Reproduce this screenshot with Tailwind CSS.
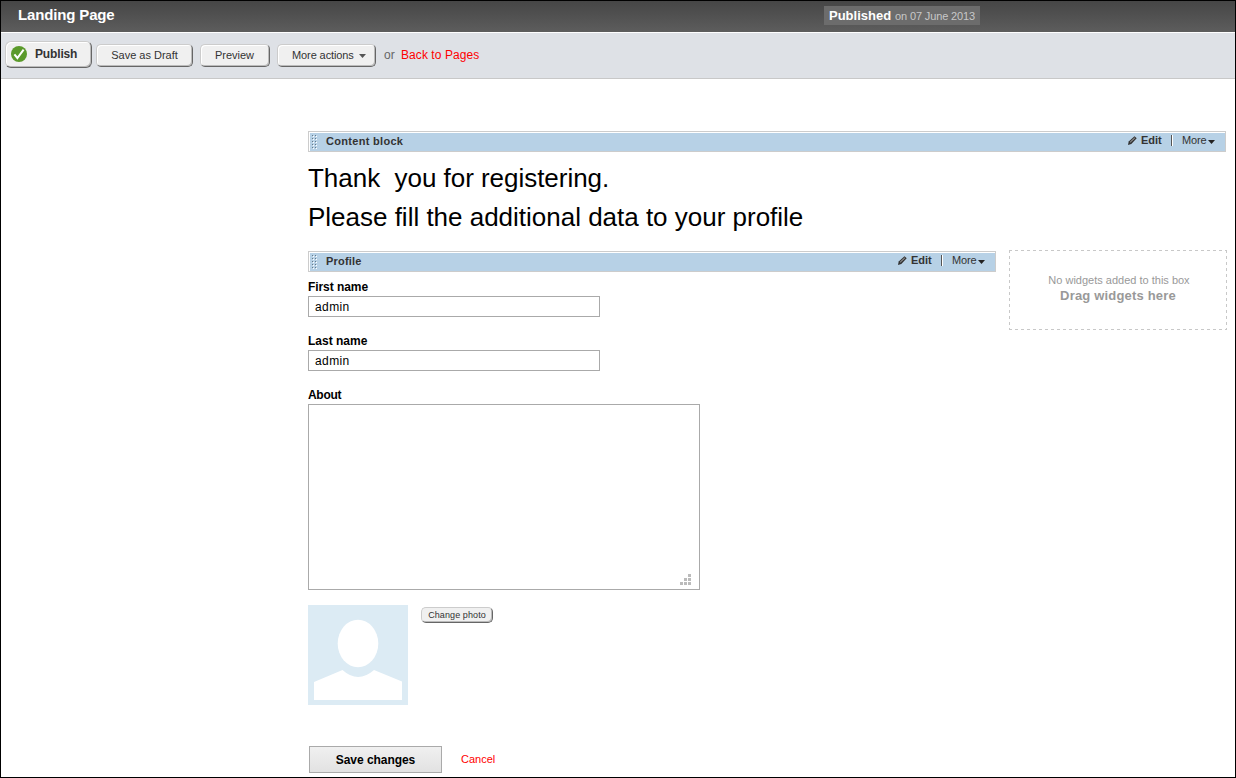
<!DOCTYPE html>
<html lang="en">
<head>
<meta charset="utf-8">
<title>Landing Page</title>
<script src="https://cdn.jsdelivr.net/npm/@tailwindcss/browser@4"></script>
</head>
<body class="bg-white font-['Liberation_Sans',Arial,sans-serif] text-black">
<div class="flex h-[778px] w-[1236px] flex-col overflow-hidden border border-black whitespace-nowrap">
  <header class="flex h-[31px] shrink-0 items-start bg-linear-to-b from-[#464646] to-[#5d5d5d] pl-[17px]">
    <h1 class="mt-[4px] w-[806px] text-[15px] leading-5 font-bold tracking-[-0.15px] text-white">Landing Page</h1>
    <p class="mt-[5px] flex h-[19px] w-[156px] items-baseline bg-[#6c6c6c] pl-[5px] leading-[19px] text-[#c8c8c8]"><b class="w-[66px] text-[13px] text-white">Published</b><span class="text-[11px] tracking-[-0.13px]">on 07 June 2013</span></p>
  </header>
  <nav class="flex h-[47px] shrink-0 items-start border-t border-b border-t-white border-b-[#c8c8c8] bg-[#dee1e6] pl-[4px] text-[11px] text-[#333]">
    <button class="mt-[8px] flex h-[27px] w-[87px] items-center rounded-[6px] border border-t-[#ccc] border-r-[#666] border-b-[#666] border-l-[#ccc] bg-[#f0f0f0] pb-px pl-[5px] text-[12px] font-bold tracking-[-0.15px] shadow-[inset_1px_1px_0_#fff,inset_-1px_-1px_0_#bbb]">
      <svg class="mr-[8px] size-4" viewBox="0 0 16 16"><circle cx="8" cy="8" r="8" fill="#5b9a2b"/><path d="M3.400 8.300l3 3.700L12.600 3.600" fill="none" stroke="#fff" stroke-width="2"/></svg>Publish
    </button>
    <button class="mt-[11px] ml-[4px] h-[23px] w-[97px] rounded-[5px] border border-t-[#ccc] border-r-[#666] border-b-[#666] border-l-[#ccc] bg-[#f0f0f0] shadow-[inset_1px_1px_0_#fff,inset_-1px_-1px_0_#bbb]">Save as Draft</button>
    <button class="mt-[11px] ml-[7px] h-[23px] w-[70px] rounded-[5px] border border-t-[#ccc] border-r-[#666] border-b-[#666] border-l-[#ccc] bg-[#f0f0f0] pr-[7px] pl-[6px] shadow-[inset_1px_1px_0_#fff,inset_-1px_-1px_0_#bbb]">Preview</button>
    <button class="mt-[11px] ml-[7px] flex h-[23px] w-[99px] items-center rounded-[5px] border border-t-[#ccc] border-r-[#666] border-b-[#666] border-l-[#ccc] bg-[#f0f0f0] pl-[14px] shadow-[inset_1px_1px_0_#fff,inset_-1px_-1px_0_#bbb]"><span class="w-[67px] text-left tracking-[-0.1px]">More actions</span><svg class="mt-px h-1 w-[7px]" viewBox="0 0 7 4"><path d="M0 0h7L3.500 4z" fill="#555"/></svg></button>
    <span class="mt-[14px] ml-[8px] w-[17px] text-[12px] leading-4 text-[#666]">or</span>
    <a class="mt-[14px] text-[12px] leading-4 tracking-[0.07px] text-[#f00]">Back to Pages</a>
  </nav>

  <main class="ml-[307px] flex flex-col pt-[52px]">
    <div class="flex h-[21px] w-[918px] items-start border border-[#ccc] bg-[#b7d1e6] text-[11px] leading-[18px] text-[#333] shadow-[inset_1px_1px_0_#fff]">
      <svg class="mt-[3px] ml-[3px] h-[15px] w-[6px]" viewBox="0 0 6 15"><defs><pattern id="grip" width="3" height="3" patternUnits="userSpaceOnUse"><path d="M0 0h1v1h-1z" fill="#667a8a"/><path d="M1 1h1v1h-1z" fill="#fff"/></pattern></defs><path d="M0 0h6v15h-6z" fill="url(#grip)"/></svg>
      <b class="ml-[8px] tracking-[0.3px]">Content block</b>
      <svg class="mt-[4px] ml-auto h-[9px] w-[9px]" viewBox="0 0 9 9"><path d="M0 9l.7-3.400L6.500 .3 8.700 2.300 3.300 8z" fill="#333"/><path d="M2.200 6.200L6.800 1.900" stroke="#b9b9b9" stroke-width="1"/></svg>
      <b class="ml-[4px] w-[30px] leading-4">Edit</b>
      <i class="mt-[3px] h-[11px] w-[2px] border-r border-l border-r-white border-l-[#555]"></i>
      <span class="ml-[9px] w-[26px] leading-4 tracking-[-0.15px]">More</span>
      <svg class="mt-[8px] mr-[10px] h-1 w-[7px]" viewBox="0 0 7 4"><path d="M0 0h7L3.500 4z" fill="#222"/></svg>
    </div>
    <div class="mt-[7px] h-[91px] text-[26px] leading-[39px]">
      <p class="whitespace-pre tracking-[-0.03px]">Thank  you for registering.</p>
      <p class="tracking-[-0.01px]">Please fill the additional data to your profile</p>
    </div>
    <div class="flex items-start">
      <section class="w-[688px]">
        <div class="mt-px flex h-[21px] items-start border border-[#ccc] bg-[#b7d1e6] text-[11px] leading-[18px] text-[#333] shadow-[inset_1px_1px_0_#fff]">
          <svg class="mt-[3px] ml-[3px] h-[15px] w-[6px]" viewBox="0 0 6 15"><path d="M0 0h6v15h-6z" fill="url(#grip)"/></svg>
          <b class="ml-[8px] tracking-[0.2px]">Profile</b>
          <svg class="mt-[4px] ml-auto h-[9px] w-[9px]" viewBox="0 0 9 9"><path d="M0 9l.7-3.400L6.500 .3 8.700 2.300 3.300 8z" fill="#333"/><path d="M2.200 6.200L6.800 1.900" stroke="#b9b9b9" stroke-width="1"/></svg>
          <b class="ml-[4px] w-[30px] leading-4">Edit</b>
          <i class="mt-[3px] h-[11px] w-[2px] border-r border-l border-r-white border-l-[#555]"></i>
          <span class="ml-[9px] w-[26px] leading-4 tracking-[-0.15px]">More</span>
          <svg class="mt-[8px] mr-[10px] h-1 w-[7px]" viewBox="0 0 7 4"><path d="M0 0h7L3.500 4z" fill="#222"/></svg>
        </div>
        <div class="mt-[6px] text-[12px]">
          <label class="block h-[18px] leading-[18px] font-bold tracking-[-0.07px]">First name</label>
          <div class="h-[21px] w-[292px] border border-[#aaa] pl-[6px] leading-[20px] tracking-[0.4px]">admin</div>
          <label class="mt-[15px] block h-[18px] leading-[18px] font-bold">Last name</label>
          <div class="h-[21px] w-[292px] border border-[#aaa] pl-[6px] leading-[20px] tracking-[0.4px]">admin</div>
          <label class="mt-[15px] block h-[18px] leading-[18px] font-bold tracking-[-0.3px]">About</label>
          <div class="flex h-[186px] w-[392px] items-end justify-end border border-[#aaa] pr-[8px] pb-[4px]">
            <svg class="size-[11px]" viewBox="0 0 11 11"><path d="M8 0h3v3H8zM4 4h3v3H4zM8 4h3v3H8zM0 8h3v3H0zM4 8h3v3H4zM8 8h3v3H8z" fill="#bbb"/></svg>
          </div>
        </div>
        <div class="mt-[15px] flex items-start">
          <svg class="size-[100px]" viewBox="0 0 100 100"><path d="M0 0h100v100H0z" fill="#dcebf4"/><ellipse cx="50" cy="38.500" rx="20.300" ry="23.700" fill="#fff"/><path d="M6 77L34.500 65Q50 79 66 65L94 76.500V95H6z" fill="#fff"/></svg>
          <button class="mt-[2px] ml-[13px] h-[16px] w-[72px] rounded-[5px] border border-t-[#ccc] border-r-[#666] border-b-[#666] border-l-[#ccc] bg-[#f0f0f0] text-[9px] leading-[14px] tracking-[0.1px] text-[#333] shadow-[inset_-1px_-1px_0_#bbb]">Change photo</button>
        </div>
        <div class="mt-[41px] ml-px flex items-center">
          <button class="h-[27px] w-[133px] border border-[#aaa] bg-linear-to-b from-[#f0f0f0] to-[#e2e2e2] text-[12px] font-bold tracking-[-0.05px]">Save changes</button>
          <a class="ml-[19px] text-[11px] text-[#f00]">Cancel</a>
        </div>
      </section>
      <aside class="relative ml-[13px] h-[80px] w-[218px] pt-[23px] text-center text-[#999]">
        <svg class="absolute inset-0 h-[80px] w-[218px]" viewBox="0 0 218 80"><path d="M0 .5H218M0 79.500H218M.5 0V80M217.500 0V80" stroke="#c8c8c8" stroke-dasharray="3 3"/></svg>
        <p class="pl-[2px] text-[11px] leading-[15px]">No widgets added to this box</p>
        <p class="text-[13px] leading-[15px] font-bold tracking-[0.18px]">Drag widgets here</p>
      </aside>
    </div>
  </main>
</div>
</body>
</html>
